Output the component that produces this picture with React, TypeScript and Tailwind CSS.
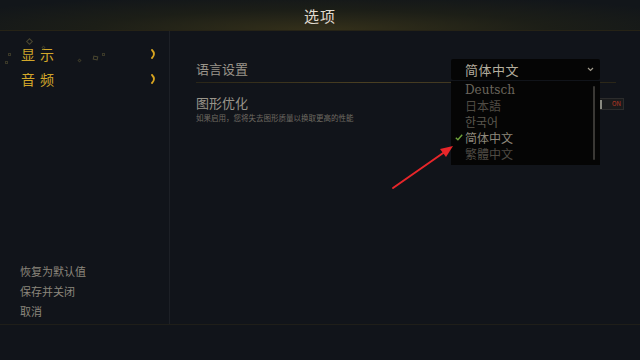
import React from "react";

const cjk = { fontFamily: '"Noto Sans CJK SC", "Noto Sans", sans-serif' };

function Chevron() {
  return (
    <svg width="6" height="10" viewBox="0 0 6 10" className="block">
      <path d="M1 1 Q5 5 1 9" stroke="#d9a520" strokeWidth="1.8" fill="none" strokeLinecap="round" />
    </svg>
  );
}

export default function App() {
  return (
    <div className="w-[640px] h-[360px] bg-[#11141a] flex flex-col overflow-hidden relative" style={cjk}>
      {/* Header */}
      <div className="h-[31px] shrink-0 flex items-center justify-center bg-[radial-gradient(ellipse_65%_120%_at_50%_100%,#34301a_0%,#1c1e17_55%,#12161a_100%)] border-b border-[#262316]">
        <span className="text-[15px] text-[#e0dbcf] leading-none tracking-[1px]">选项</span>
      </div>
      <div className="flex flex-1 min-h-0">
        {/* Sidebar */}
        <div className="w-[170px] shrink-0 border-r border-[#1d2026] flex flex-col relative">
          <div className="flex flex-col pt-[14px] gap-[7px] pl-[21px] pr-[12px]">
            <div className="flex items-center justify-between h-[18px]">
              <span className="text-[14px] text-[#d2a72a] tracking-[5px] leading-none">显示</span>
              <Chevron />
            </div>
            <div className="flex items-center justify-between h-[18px]">
              <span className="text-[14px] text-[#d2a72a] tracking-[5px] leading-none">音频</span>
              <Chevron />
            </div>
          </div>
          {/* sparkles */}
          <div className="absolute left-[27px] top-[8px] w-[5px] h-[5px] border border-[#4a4630] rotate-45" />
          <div className="absolute left-[8px] top-[22px] w-[3px] h-[3px] border border-[#3a3828]" />
          <div className="absolute left-[42px] top-[15px] w-[3px] h-[3px] border border-[#3a3828] rotate-45" />
          <div className="absolute left-[93px] top-[25px] w-[5px] h-[4px] border border-[#4a4630] rotate-12" />
          <div className="absolute left-[78px] top-[28px] w-[3px] h-[3px] border border-[#3a3828] rotate-45" />
          <div className="absolute left-[5px] top-[30px] w-[3px] h-[3px] border border-[#3a3828]" />
          <div className="absolute left-[102px] top-[22px] w-[3px] h-[3px] border border-[#3a3828]" />
          <div className="mt-auto flex flex-col gap-[6px] px-[20px] pb-[6px]">
            <span className="text-[11px] text-[#8c877d] leading-[14px]">恢复为默认值</span>
            <span className="text-[11px] text-[#8c877d] leading-[14px]">保存并关闭</span>
            <span className="text-[11px] text-[#8c877d] leading-[14px]">取消</span>
          </div>
        </div>
        {/* Main */}
        <div className="flex-1 flex flex-col pl-[26px] pr-[24px] pt-[27px]">
          <div className="h-[21px] flex items-center">
            <span className="text-[13px] text-[#9a958a] leading-none">语言设置</span>
          </div>
          <div className="h-px mt-[3px] bg-[linear-gradient(90deg,#2a2618,#4a3f22_40%,#3a3220_80%,#2a2618)]" />
          <div className="mt-[10px] flex flex-col">
            <span className="text-[13px] text-[#9a958a] leading-[19px]">图形优化</span>
            <span className="text-[7.5px] text-[#6f6a62] leading-[11px]">如果启用，您将失去图形质量以换取更高的性能</span>
          </div>
        </div>
      </div>
      {/* Footer */}
      <div className="h-[36px] shrink-0 border-t border-[#1f1e19]" />

      {/* Toggle behind dropdown */}
      <div className="absolute left-[597px] top-[98px] w-[27px] h-[12px] bg-[#1a1b1c] border border-[#2c2c2c] flex items-center">
        <div className="w-[3px] h-[9px] bg-[#8a8a80] ml-[1px]" />
        <span className="text-[6px] text-[#c03a24] ml-[10px] leading-none">ON</span>
      </div>

      {/* Dropdown */}
      <div className="absolute left-[451px] top-[59px] w-[149px] h-[21px] bg-[#050505] rounded-[2px] flex items-center justify-between pl-[14px] pr-[6px]">
        <span className="text-[13px] text-[#b5ae9e] leading-none tracking-[0.5px]">简体中文</span>
        <svg width="7" height="5" viewBox="0 0 7 5"><path d="M1 1 L3.5 3.5 L6 1" stroke="#a09a8c" strokeWidth="1.2" fill="none" /></svg>
      </div>
      <div className="absolute left-[451px] top-[81px] w-[149px] h-[84px] bg-[#050505] flex">
        <div className="flex-1 flex flex-col pl-[14px] pt-[1px]">
          <span className="h-[16px] leading-[16px] text-[12px] text-[#6b665c]" style={{ fontFamily: '"DejaVu Serif", "Liberation Serif", serif', fontWeight: 300 }}>Deutsch</span>
          <span className="h-[16px] leading-[16px] text-[12px] text-[#4f4b44]">日本語</span>
          <span className="h-[16px] leading-[16px] text-[12px] text-[#5b574e]" style={{ fontFamily: '"Noto Sans CJK KR", sans-serif' }}>한국어</span>
          <span className="h-[16px] leading-[16px] text-[12px] text-[#8e887c] relative">
            <svg className="absolute left-[-10px] top-[4px]" width="8" height="7" viewBox="0 0 8 7"><path d="M0.8 3.8 L2.9 5.8 L7.2 0.8" stroke="#6ea23a" strokeWidth="1.4" fill="none" /></svg>
            简体中文
          </span>
          <span className="h-[16px] leading-[16px] text-[12px] text-[#4f4b44]">繁體中文</span>
        </div>
        <div className="w-[2px] bg-[#3a3835] mt-[5px] mb-[5px] mr-[5px] rounded" />
      </div>

      {/* Red arrow annotation */}
      <svg className="absolute left-0 top-0 pointer-events-none" width="640" height="360">
        <line x1="393" y1="188" x2="446" y2="151" stroke="#e8262a" strokeWidth="2" strokeLinecap="round" />
        <polygon points="453,146 440,149 446,157" fill="#e8262a" />
      </svg>
    </div>
  );
}
